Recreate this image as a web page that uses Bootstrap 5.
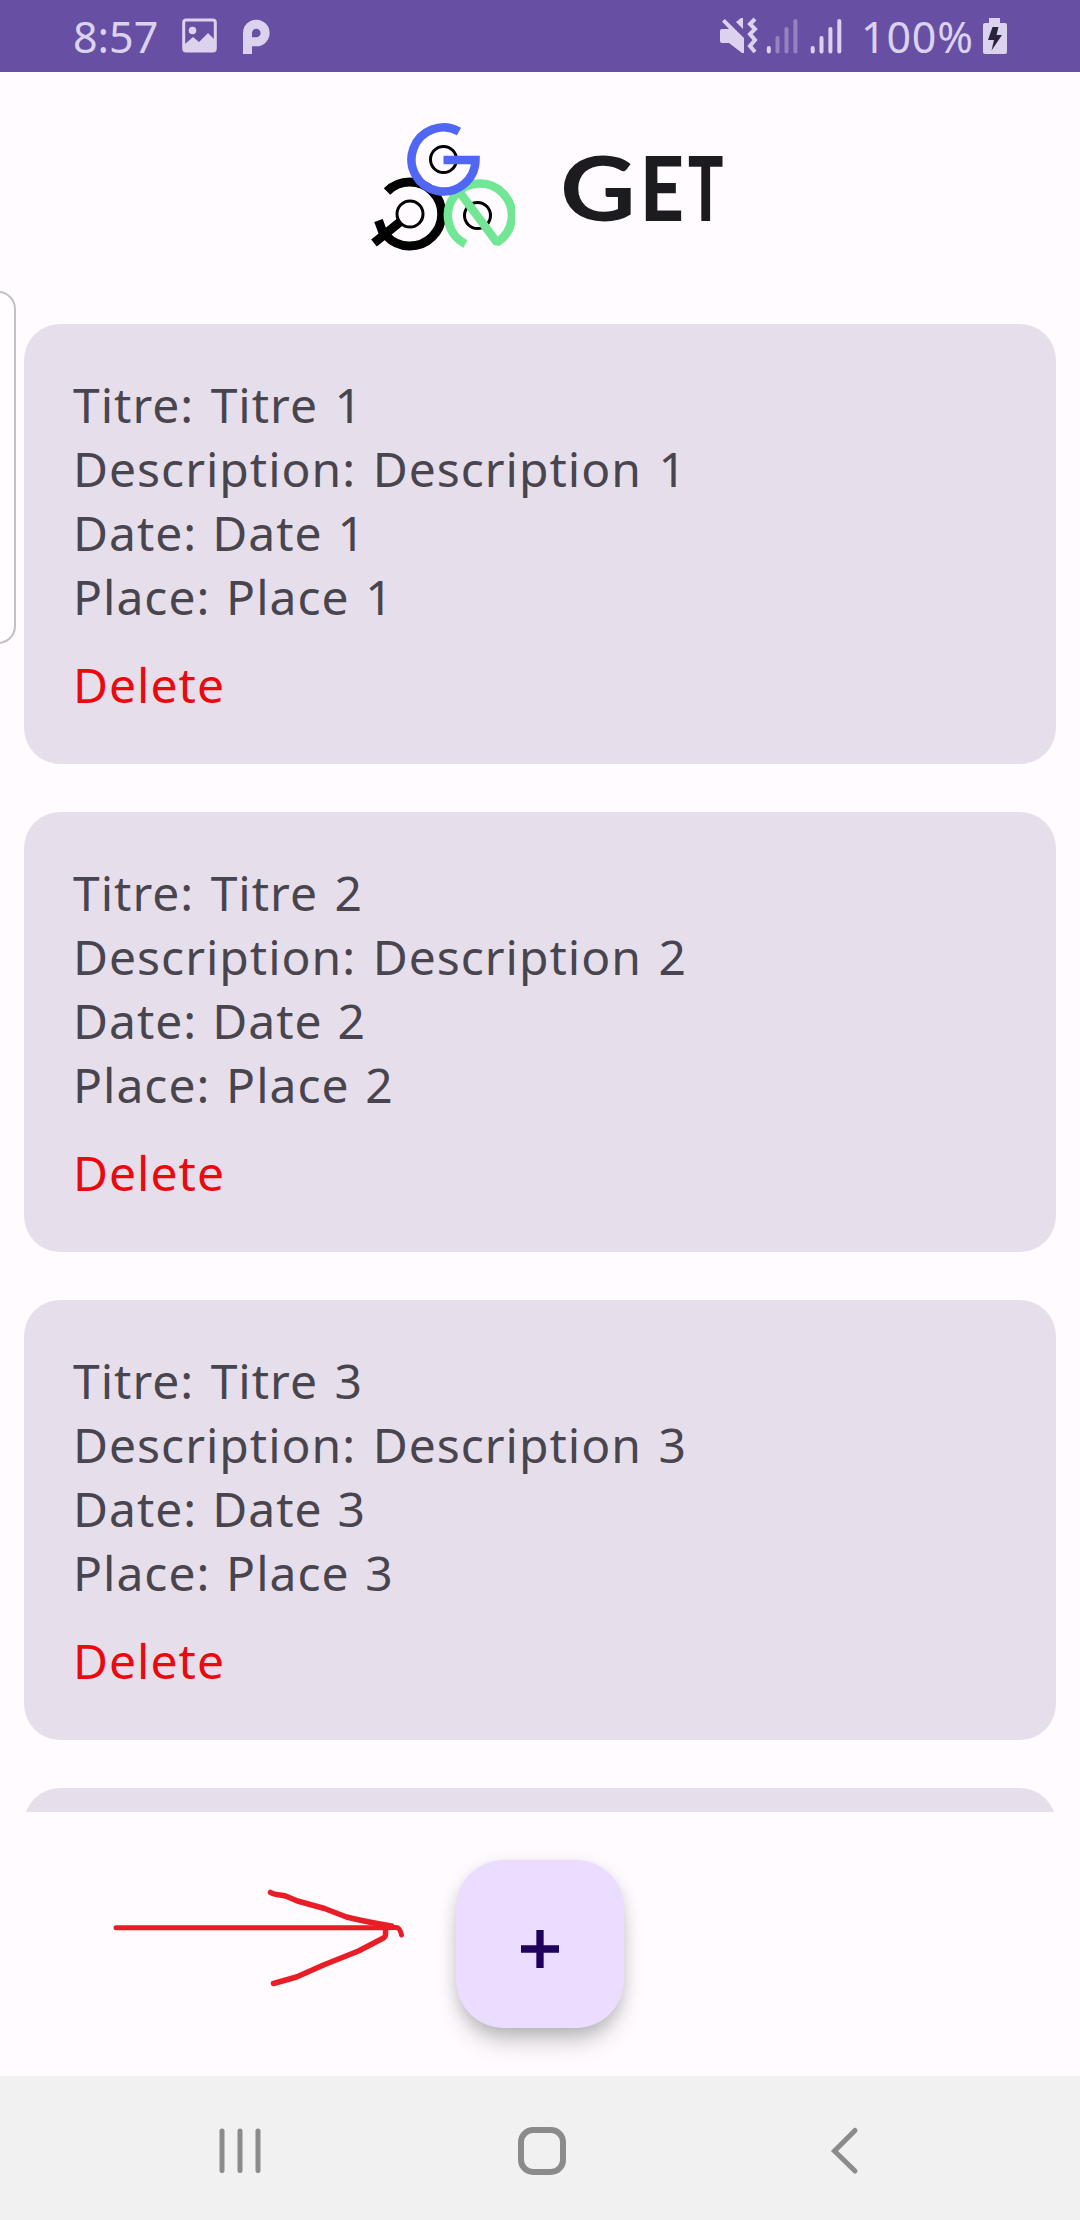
<!DOCTYPE html>
<html lang="fr">
<head>
<meta charset="utf-8">
<meta name="viewport" content="width=device-width, initial-scale=1">
<title>GET</title>
<link href="https://cdn.jsdelivr.net/npm/bootstrap@5.3.0/dist/css/bootstrap.min.css" rel="stylesheet">
<style>
body{background:#fffbff;font-family:"Noto Sans","Open Sans",sans-serif;overflow:hidden}
.phone{width:1080px;height:2220px}
.statusbar{height:72px;background:#6750a3;color:#dcd2ee;padding:0 73px 0 73px;font-size:43px;line-height:72px}
.statusbar svg{display:block;flex:none}
.clock{width:85px;letter-spacing:0;white-space:nowrap;margin-right:24px;position:relative;top:1px}
.pct{width:113px;letter-spacing:.8px;white-space:nowrap;margin:0 9px 0 15px;position:relative;top:1px}
.brand{height:252px;padding:51px 0 0 371px}
.brand-name{font-family:Lato,sans-serif;font-weight:900;font-size:90px;line-height:110px;color:#1c1b1f;margin:8px 0 0 45px;white-space:nowrap}
.brand-name span{display:inline-block;transform-origin:0 50%}
.glyph-g{width:80px;font-weight:700;transform:scaleX(1.16)}
.glyph-e{width:48px;transform:scaleX(.85)}
.glyph-t{transform:scaleX(.65)}
.feed{height:1488px;padding:0 24px}
.note{height:440px;flex:none;border-radius:36px;background:#e6dfeb;color:#49454f;padding:49px 49px;font-size:48px;line-height:64px;letter-spacing:1px;word-spacing:3px;white-space:nowrap}
.note-date{word-spacing:1.5px}
.note-place{word-spacing:2.3px}
.remove{color:#e80a0e;background:none;border:0;padding:0;margin-top:24px;letter-spacing:inherit;display:block;line-height:64px}
.actions{height:264px}
.fab{width:168px;height:168px;border-radius:48px;border:0;background:#eaddff;margin-top:48px;padding:10px 0 0;box-shadow:0 18px 26px -6px rgba(0,0,0,.22),0 4px 16px rgba(0,0,0,.13)}
.arrow{left:100px;top:1870px}
.navkeys{height:144px;background:#f1f1f1}
.edge-panel{left:-20px;top:291px;width:36px;height:353px;border:2px solid #c2c0c4;border-radius:20px;background:#fffdff}
</style>
</head>
<body>
<div class="phone d-flex flex-column position-relative overflow-hidden">
  <header class="statusbar d-flex align-items-center">
    <span class="clock">8:57</span>
    <svg width="36" height="36" viewBox="0 0 36 36"><rect x="1.7" y="2" width="31.6" height="31" rx="2.5" fill="none" stroke="#dcd2ee" stroke-width="3"/><circle cx="10.5" cy="12.5" r="3.8" fill="#dcd2ee"/><path d="M3 26l8-7 6 5 9-9 7 7v11H3z" fill="#dcd2ee"/></svg>
    <svg class="ms-4" width="30" height="36" viewBox="0 0 30 36"><path d="M5.500 36V15A8.800 8.800 0 1 1 14.300 23.800H5.500" fill="none" stroke="#dcd2ee" stroke-width="9"/></svg>
    <svg class="ms-auto" width="126" height="38" viewBox="0 0 126 38" fill="#dcd2ee"><path d="M2 12h7L2 4.500 4.800 2 24 21v15h-2L9 26H2Q0 26 0 24V14q0-2 2-2zM23 1v11l-7-7 5-4z"/><path d="M35 2l-5 5 5 5-5 5 5 6-5 6 5 6" fill="none" stroke="#dcd2ee" stroke-width="4"/><g fill="none" stroke="#dcd2ee" stroke-width="4" stroke-linecap="round"><path d="M48.800 31v3.500"/><path opacity=".4" d="M57.500 21v13.500M66.500 12v22.500M75.400 4v30.500"/><path d="M92.700 31v3.500M101.500 21v13.500M110.400 12v22.500M119.300 4v30.500"/></g></svg>
    <span class="pct">100%</span>
    <svg width="24" height="38" viewBox="0 0 24 38"><path d="M6 1h11v5h5q2 0 2 2v27q0 2-2 2H2q-2 0-2-2V8q0-2 2-2h4z" fill="#dcd2ee"/><path d="M9.500 10h6l-2 8H19L8.500 33.500 11 23H5z" fill="#29213d"/></svg>
  </header>
  <div class="brand d-flex align-items-start">
    <svg width="144" height="130" viewBox="371 123 144 130" fill="none"><circle cx="410" cy="214" r="13" stroke="#000" stroke-width="3"/><circle cx="477.500" cy="215.500" r="13" stroke="#000" stroke-width="3"/><circle cx="443.500" cy="159.500" r="13" stroke="#000" stroke-width="3"/>
    <path d="M387 191.500A32 32 0 1 1 386.500 236" stroke="#000" stroke-width="9"/><path d="M400 222l-26 21M378.500 220.500l5.500 15" stroke="#000" stroke-width="9"/>
    <path d="M465.500 244A32 32 0 1 1 497 242.500L458 190" stroke="#71e695" stroke-width="8.500" stroke-linejoin="bevel"/>
    <path d="M459 131.500A32 32 0 1 0 475.500 160H443.500" stroke="#5067f5" stroke-width="8.500"/></svg>
    <h1 class="brand-name"><span class="glyph-g">G</span><span class="glyph-e">E</span><span class="glyph-t">T</span></h1>
  </div>
  <main class="feed d-flex flex-column gap-5 overflow-hidden">
    <article class="note"><div>Titre: Titre 1</div><div>Description: Description 1</div><div class="note-date">Date: Date 1</div><div class="note-place">Place: Place 1</div><button class="remove">Delete</button></article>
    <article class="note"><div>Titre: Titre 2</div><div>Description: Description 2</div><div class="note-date">Date: Date 2</div><div class="note-place">Place: Place 2</div><button class="remove">Delete</button></article>
    <article class="note"><div>Titre: Titre 3</div><div>Description: Description 3</div><div class="note-date">Date: Date 3</div><div class="note-place">Place: Place 3</div><button class="remove">Delete</button></article>
    <article class="note"></article>
  </main>
  <section class="actions d-flex justify-content-center align-items-start">
    <button class="fab d-flex align-items-center justify-content-center" aria-label="+"><svg width="38" height="38" viewBox="0 0 38 38"><path d="M0 19h38M19 0v38" stroke="#21005d" stroke-width="7.300"/></svg></button>
  </section>
  <nav class="navkeys">
    <svg width="1080" height="144" viewBox="0 2076 1080 144" fill="none" stroke="#8b8b8b"><path d="M222 2131v39.500M240 2131v39.500M258 2131v39.500" stroke-width="5" stroke-linecap="round"/><rect x="521" y="2130" width="42" height="42" rx="12" stroke-width="6"/><path d="M855 2130.500L834.500 2151 855 2171" stroke-width="5" stroke-linecap="round"/></svg>
  </nav>
  <div class="edge-panel position-absolute"></div>
  <svg class="arrow position-absolute" width="310" height="120" viewBox="100 1870 310 120" fill="none" stroke="#e91d25" stroke-width="5" stroke-linecap="round" stroke-linejoin="round"><path d="M116 1927.700H390"/><path d="M270.500 1892.500c5 3 10 2 15 3.500l12 5 27 7.500 22 8.500q20 5 45 9M385.500 1929.500c0 6 1 7-4 9.500l-23 12-35 14-27 12-23 6.500" stroke-width="5.500"/><path d="M392 1927.500h4q4 0 5.500 7.500"/></svg>
</div>
<script src="https://cdn.jsdelivr.net/npm/bootstrap@5.3.0/dist/js/bootstrap.bundle.min.js"></script>
</body>
</html>
